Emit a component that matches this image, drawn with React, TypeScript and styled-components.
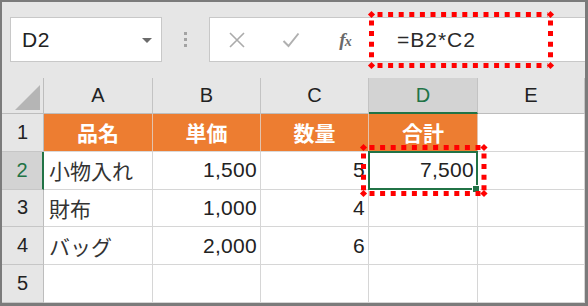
import React from "react";
import styled, { createGlobalStyle, css } from "styled-components";

const GlobalStyle = createGlobalStyle`
  html, body { margin: 0; padding: 0; background: #ffffff; }
  * { box-sizing: border-box; }
`;

const GREEN = "#217346";

const Frame = styled.div`
  position: relative;
  width: 588px;
  height: 306px;
  border-style: solid;
  border-color: #7b7b7b;
  border-width: 2px 3px 3px 2px;
  background: #e6e6e6;
  display: flex;
  flex-direction: column;
  overflow: hidden;
  font-family: "Liberation Sans", "Noto Sans CJK JP", sans-serif;
  color: #222;
`;

const Toolbar = styled.div`
  height: 76px;
  flex: none;
  display: flex;
  align-items: flex-start;
  padding: 15px 0 0 8px;
`;

const NameBox = styled.div`
  width: 152px;
  height: 45px;
  background: #fff;
  border: 1px solid #c8c8c8;
  display: flex;
  align-items: center;
  justify-content: space-between;
  padding: 0 9px 0 11px;
  font-size: 21px;
  letter-spacing: 0.5px;
`;

const Caret = styled.span`
  width: 0;
  height: 0;
  border-left: 5px solid transparent;
  border-right: 5px solid transparent;
  border-top: 5px solid #6b6b6b;
  margin-top: 1px;
`;

const Grip = styled.div`
  width: 47px;
  height: 45px;
  display: flex;
  flex-direction: column;
  align-items: center;
  justify-content: center;
  gap: 3px;
`;

const GripDot = styled.span`
  width: 3px;
  height: 3px;
  background: #a3a3a3;
`;

const FormulaBar = styled.div`
  flex: 1;
  height: 45px;
  background: #fff;
  border: 1px solid #c8c8c8;
  border-right: none;
  display: flex;
  align-items: center;
  padding-left: 18px;
`;

const IconSlot = styled.span<{ $w: number; $gap: number }>`
  width: ${(p) => p.$w}px;
  margin-right: ${(p) => p.$gap}px;
  display: flex;
  align-items: center;
  justify-content: center;
`;

const Fx = styled.span`
  font-family: "Liberation Serif", serif;
  font-style: italic;
  font-weight: bold;
  color: #6a6a6a;
  font-size: 19px;
  letter-spacing: -1px;
  line-height: 1;
  & small {
    font-size: 14px;
  }
`;

const FormulaText = styled.span`
  font-size: 21px;
  letter-spacing: 1px;
  color: #2a2a2a;
`;

const Sheet = styled.div`
  flex: 1;
  display: grid;
  grid-template-columns: 42px 109px 108px 108px 109px 1fr;
  grid-template-rows: 36px repeat(5, 1fr);
`;

const Corner = styled.div`
  background: #e6e6e6;
  border-right: 1px solid #bdbdbd;
  border-bottom: 1px solid #bdbdbd;
  display: flex;
  align-items: flex-end;
  justify-content: flex-end;
  padding: 0 3px 3px 0;
`;

const CornerTriangle = styled.span`
  width: 0;
  height: 0;
  border-left: 25px solid transparent;
  border-bottom: 25px solid #b5b5b5;
`;

const ColHeader = styled.div<{ $active?: boolean }>`
  background: ${(p) => (p.$active ? "#d3d3d3" : "#e6e6e6")};
  color: ${(p) => (p.$active ? GREEN : "#222")};
  border-right: 1px solid #c3c3c3;
  border-bottom: ${(p) => (p.$active ? `2px solid ${GREEN}` : "1px solid #bdbdbd")};
  display: flex;
  align-items: center;
  justify-content: center;
  font-size: 20px;
  padding-top: ${(p) => (p.$active ? "1px" : "0")};
`;

const RowHeader = styled.div<{ $active?: boolean }>`
  background: ${(p) => (p.$active ? "#d3d3d3" : "#e6e6e6")};
  color: ${(p) => (p.$active ? GREEN : "#222")};
  border-right: ${(p) => (p.$active ? `2px solid ${GREEN}` : "1px solid #bdbdbd")};
  border-bottom: 1px solid #c6c6c6;
  display: flex;
  align-items: center;
  justify-content: center;
  font-size: 20px;
`;

type Variant = "title" | "text" | "num" | "empty";

const Cell = styled.div<{ $variant: Variant; $selected?: boolean }>`
  position: relative;
  background: #fff;
  border-right: 1px solid #d6d6d6;
  border-bottom: 1px solid #d6d6d6;
  display: flex;
  align-items: center;
  font-size: 21px;
  white-space: nowrap;
  ${(p) =>
    p.$variant === "title" &&
    css`
      background: #ed7d31;
      color: #fff;
      font-weight: bold;
      justify-content: center;
      border-right-color: #e3c3ad;
      border-bottom-color: #d9d9d9;
    `}
  ${(p) =>
    p.$variant === "text" &&
    css`
      justify-content: flex-start;
      padding-left: 5px;
      color: #333;
    `}
  ${(p) =>
    p.$variant === "num" &&
    css`
      justify-content: flex-end;
      padding-right: 3px;
      letter-spacing: 0.3px;
    `}
  ${(p) =>
    p.$selected &&
    css`
      z-index: 1;
      &::after {
        content: "";
        position: absolute;
        left: -1px;
        top: -1px;
        right: -1px;
        bottom: -1px;
        border: 2px solid ${GREEN};
      }
      &::before {
        content: "";
        position: absolute;
        right: -3px;
        bottom: -4px;
        width: 6px;
        height: 6px;
        background: ${GREEN};
        border: 1px solid #fff;
        z-index: 2;
      }
    `}
`;

const Overlay = styled.svg`
  position: absolute;
  left: -2px;
  top: -2px;
  width: 588px;
  height: 306px;
  pointer-events: none;
  z-index: 5;
`;

const COLS = ["A", "B", "C", "D", "E"];

type CellData = { v: string; t: Variant };

const ROWS: CellData[][] = [
  [
    { v: "品名", t: "title" },
    { v: "単価", t: "title" },
    { v: "数量", t: "title" },
    { v: "合計", t: "title" },
    { v: "", t: "empty" },
  ],
  [
    { v: "小物入れ", t: "text" },
    { v: "1,500", t: "num" },
    { v: "5", t: "num" },
    { v: "7,500", t: "num" },
    { v: "", t: "empty" },
  ],
  [
    { v: "財布", t: "text" },
    { v: "1,000", t: "num" },
    { v: "4", t: "num" },
    { v: "", t: "empty" },
    { v: "", t: "empty" },
  ],
  [
    { v: "バッグ", t: "text" },
    { v: "2,000", t: "num" },
    { v: "6", t: "num" },
    { v: "", t: "empty" },
    { v: "", t: "empty" },
  ],
  [
    { v: "", t: "empty" },
    { v: "", t: "empty" },
    { v: "", t: "empty" },
    { v: "", t: "empty" },
    { v: "", t: "empty" },
  ],
];

function DottedBox({ x1, y1, x2, y2 }: { x1: number; y1: number; x2: number; y2: number }) {
  const d = 3.6;
  const dash = "5 5.6";
  const sw = 5;
  const diamond = (cx: number, cy: number) =>
    `${cx - d},${cy} ${cx},${cy - d} ${cx + d},${cy} ${cx},${cy + d}`;
  return (
    <g stroke="#ff0000" strokeWidth={sw} strokeDasharray={dash} fill="none">
      <line x1={x1 + 6} y1={y1} x2={x2 - 3} y2={y1} />
      <line x1={x1 + 6} y1={y2} x2={x2 - 3} y2={y2} />
      <line x1={x1} y1={y1 + 6} x2={x1} y2={y2 - 3} />
      <line x1={x2} y1={y1 + 6} x2={x2} y2={y2 - 3} />
      <g stroke="none" fill="#ff0000">
        <polygon points={diamond(x1, y1)} />
        <polygon points={diamond(x2, y1)} />
        <polygon points={diamond(x1, y2)} />
        <polygon points={diamond(x2, y2)} />
      </g>
    </g>
  );
}

export default function App() {
  return (
    <>
      <GlobalStyle />
      <Frame>
        <Toolbar>
          <NameBox>
            <span>D2</span>
            <Caret />
          </NameBox>
          <Grip>
            <GripDot />
            <GripDot />
            <GripDot />
          </Grip>
          <FormulaBar>
            <IconSlot $w={18} $gap={36}>
              <svg width="18" height="16" viewBox="0 0 18 16">
                <path d="M2 1 L16 15 M16 1 L2 15" stroke="#ababab" strokeWidth="1.6" fill="none" />
              </svg>
            </IconSlot>
            <IconSlot $w={18} $gap={35}>
              <svg width="18" height="16" viewBox="0 0 18 16">
                <path d="M1.5 9 L6.5 14 L16.5 1.5" stroke="#b0b0b0" strokeWidth="2" fill="none" />
              </svg>
            </IconSlot>
            <IconSlot $w={20} $gap={42}>
              <Fx>
                f<small>x</small>
              </Fx>
            </IconSlot>
            <FormulaText>=B2*C2</FormulaText>
          </FormulaBar>
        </Toolbar>
        <Sheet>
          <Corner>
            <CornerTriangle />
          </Corner>
          {COLS.map((c) => (
            <ColHeader key={c} $active={c === "D"}>
              {c}
            </ColHeader>
          ))}
          {ROWS.map((row, ri) => (
            <React.Fragment key={ri}>
              <RowHeader $active={ri === 1}>{ri + 1}</RowHeader>
              {row.map((cell, ci) => (
                <Cell key={ci} $variant={cell.t} $selected={ri === 1 && ci === 3}>
                  {cell.v}
                </Cell>
              ))}
            </React.Fragment>
          ))}
        </Sheet>
        <Overlay viewBox="0 0 588 306">
          <DottedBox x1={371.5} y1={14.5} x2={550.5} y2={65.5} />
          <DottedBox x1={363.5} y1={147.5} x2={484} y2={193.5} />
        </Overlay>
      </Frame>
    </>
  );
}
